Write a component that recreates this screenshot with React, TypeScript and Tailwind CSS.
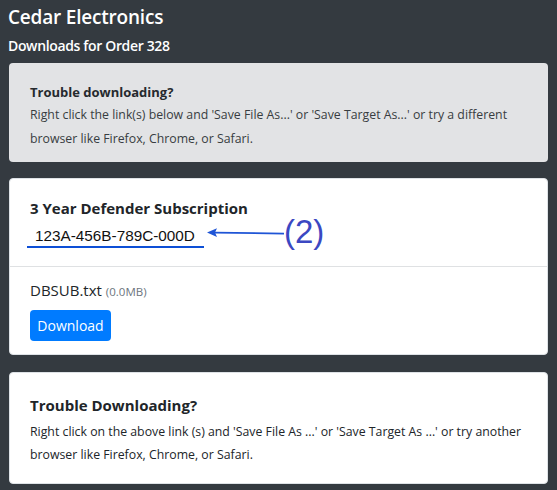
import React from 'react';

const sans = "font-['Open_Sans',sans-serif]";

const KeyAnnotation: React.FC = () => (
    <div className="flex items-center h-[32px]">
        <div className="w-[177px] border-b-2 border-[#0d4fd6] pl-[8px] h-[24px] flex items-end">
            <span className="font-['Liberation_Sans',sans-serif] text-[15.3px] leading-[20px] text-[#111]">
                123A-456B-789C-000D
            </span>
        </div>
        <svg width="80" height="12" viewBox="0 0 80 12" className="ml-[2px] -mt-[7px]">
            <line x1="8" y1="5.6" x2="78" y2="6.6" stroke="#1f55d6" strokeWidth="1.8" />
            <path d="M1 5.6 L11 1.2 L9 5.6 L11 10 Z" fill="#1f55d6" />
        </svg>
        <span className="font-['Liberation_Sans',sans-serif] text-[33px] leading-[34px] text-[#3b48c2] -mt-[9px] -ml-[2px]">
            (2)
        </span>
    </div>
);

export default function App() {
    return (
        <div className={`min-h-screen bg-[#343a40] px-[9px] pt-[4px] pb-[6px] ${sans}`}>
            <h1 className="text-white text-[19px] tracking-[-0.2px] font-semibold leading-[27px] -ml-[1px]">Cedar Electronics</h1>
            <h2 className="text-white text-[14px] tracking-[-0.35px] font-semibold leading-[20px] mt-[5px] -ml-[1px]">Downloads for Order 328</h2>

            <div className="mt-[7px] bg-[#e2e3e5] rounded-[4px] px-[21px] pt-[18px] pb-[11px] text-[#383d41]">
                <p className="font-bold text-[13px] leading-[22px] text-[#262a2e]">Trouble downloading?</p>
                <p className="text-[12.3px] leading-[24px]">
                    Right click the link(s) below and 'Save File As...' or 'Save Target As...' or try a different
                    browser like Firefox, Chrome, or Safari.
                </p>
            </div>

            <div className="mt-[16px] bg-white rounded-[4px] border border-[#dee2e6]">
                <div className="px-[20px] pt-[18px] pb-[14px] border-b border-[#dfe1e3]">
                    <p className="font-bold text-[15px] leading-[22px] text-[#212529]">3 Year Defender Subscription</p>
                    <div className="-ml-[3px] mt-[1px]">
                        <KeyAnnotation />
                    </div>
                </div>
                <div className="px-[20px] pt-[12px] pb-[13px]">
                    <p className="text-[15px] leading-[22px] text-[#212529]">
                        DBSUB.txt <span className="text-[11.5px] text-[#6c757d]">(0.0MB)</span>
                    </p>
                    <button className="mt-[7px] bg-[#007bff] text-white text-[14px] leading-[20px] rounded-[4px] w-[81px] h-[31px]">
                        Download
                    </button>
                </div>
            </div>

            <div className="mt-[17px] bg-white rounded-[4px] border border-[#dee2e6] px-[20px] pt-[20px] pb-[17px]">
                <p className="font-bold text-[15px] leading-[24px] text-[#212529]">Trouble Downloading?</p>
                <p className="text-[12.3px] leading-[23px] text-[#212529] mt-[3px]">
                    Right click on the above link (s) and 'Save File As ...' or 'Save Target As ...' or try another
                    browser like Firefox, Chrome, or Safari.
                </p>
            </div>
        </div>
    );
}
